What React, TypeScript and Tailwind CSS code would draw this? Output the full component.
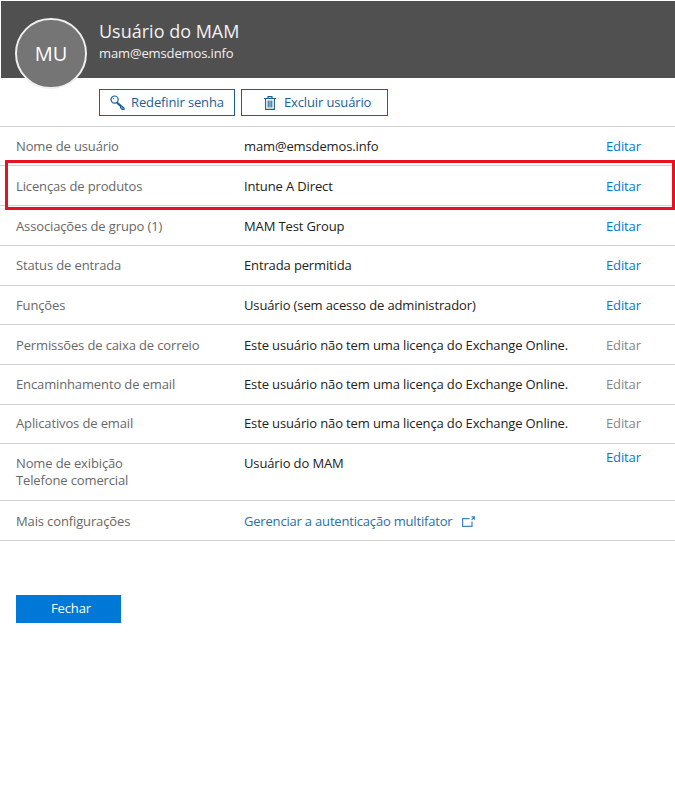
import React from "react";

const rows = [
  { label: "Nome de usuário", value: "mam@emsdemos.info", h: "h-[39px] pt-px" },
  { label: "Licenças de produtos", value: "Intune A Direct", h: "h-[40px] pt-[2px]" },
  { label: "Associações de grupo (1)", value: "MAM Test Group", h: "h-[40px] pt-[2px]" },
  { label: "Status de entrada", value: "Entrada permitida", h: "h-[40px]" },
  { label: "Funções", value: "Usuário (sem acesso de administrador)", h: "h-[39px] pt-px" },
  { label: "Permissões de caixa de correio", value: "Este usuário não tem uma licença do Exchange Online.", h: "h-[40px] pt-[2px]", off: true },
  { label: "Encaminhamento de email", value: "Este usuário não tem uma licença do Exchange Online.", h: "h-[40px]", off: true },
  { label: "Aplicativos de email", value: "Este usuário não tem uma licença do Exchange Online.", h: "h-[39px]", off: true },
];

const KeyIcon = () => (
  <svg width="15" height="15" viewBox="0 0 15 15" fill="none" stroke="#1b5e96" strokeWidth="1.2">
    <circle cx="4.6" cy="4.6" r="3.6" />
    <path d="M7.2 7.2 L14 13 L14 14.4 L12 14.4 L12 13 L10.6 13 L10.6 11.4 L9.2 10.2 L6.8 8" />
    <circle cx="3.6" cy="3.6" r="0.7" fill="#1b5e96" stroke="none" />
  </svg>
);

const TrashIcon = () => (
  <svg width="12" height="14" viewBox="0 0 12 14" fill="none" stroke="#1b5e96" strokeWidth="1.1">
    <path d="M0 2.5 H12 M4 2.5 V0.6 H8 V2.5 M1.6 2.5 V13.4 H10.4 V2.5" />
    <path d="M4.2 4.6 V11.4 M6 4.6 V11.4 M7.8 4.6 V11.4" />
  </svg>
);

const ExternalIcon = () => (
  <svg width="13" height="11" viewBox="0 0 13 11" fill="none" stroke="#3f86c6" strokeWidth="1.2">
    <path d="M7.5 2.6 H0.6 V10.4 H10 V5.5" />
    <path d="M9.5 0.8 H12.6 V3.8 M12.4 1 L9.6 3.8" />
  </svg>
);

export default function App() {
  return (
    <div className="relative w-[675px] h-[812px] bg-white text-[13px] tracking-[-0.13px] font-['Open_Sans',sans-serif] overflow-hidden">
      <div className="ml-px mt-px h-[77px] bg-[#505050] flex pl-[98px] pt-[18px] text-white">
        <div>
          <div className="text-[18px] leading-[24px] tracking-normal text-[#f0f0f0]">Usuário do MAM</div>
          <div className="text-[13px] leading-[20px] text-[#f0f0f0]">mam@emsdemos.info</div>
        </div>
      </div>

      {/* avatar sits over the header edge */}
      <div className="absolute left-[15px] top-[18px] w-[72px] h-[71px] rounded-full bg-[#757575] border-2 border-[#eeeeee] flex items-center justify-center text-white text-[20px]">
        MU
      </div>

      <div className="flex gap-[6px] pl-[99px] pt-[11px] h-[48px] text-[#1b5e96]">
        <button className="w-[136px] h-[27px] border border-[#1b5e96] flex items-center pl-[10px] gap-[6px]">
          <KeyIcon />
          Redefinir senha
        </button>
        <button className="w-[147px] h-[27px] border border-[#1b5e96] flex items-center pl-[22px] gap-[8px]">
          <TrashIcon />
          Excluir usuário
        </button>
      </div>

      <div className="border-t border-[#d2d2d2]">
        {rows.map((row) => (
          <div key={row.label} className={`${row.h} border-b border-[#d2d2d2] flex items-center pl-4`}>
            <div className="w-[228px] text-[#686868]">{row.label}</div>
            <div className="w-[362px] text-[#222222] whitespace-nowrap">{row.value}</div>
            <div className={row.off ? "text-[#868686]" : "text-[#0078d4]"}>Editar</div>
          </div>
        ))}
        <div className="h-[57px] border-b border-[#d2d2d2] flex pl-4 pt-[10px] leading-[18px]">
          <div className="w-[228px] text-[#686868]">
            <div>Nome de exibição</div>
            <div className="-mt-px">Telefone comercial</div>
          </div>
          <div className="w-[362px] text-[#222222]">Usuário do MAM</div>
          <div className="text-[#0078d4] -mt-[6px]">Editar</div>
        </div>
        <div className="h-[40px] border-b border-[#d2d2d2] flex items-center pl-4 pt-[2px]">
          <div className="w-[228px] text-[#686868]">Mais configurações</div>
          <div className="flex items-center gap-[10px] tracking-[-0.19px] text-[#2a6ea6]">
            Gerenciar a autenticação multifator
            <ExternalIcon />
          </div>
        </div>
      </div>

      <button className="block ml-4 mt-[54px] w-[105px] h-[28px] pl-[5px] bg-[#0078d7] text-white">Fechar</button>

      {/* highlight box drawn over the licence row */}
      <div className="absolute left-[5px] top-[160px] w-[670px] h-[50px] border-[3px] border-[#e81123]" />
    </div>
  );
}
